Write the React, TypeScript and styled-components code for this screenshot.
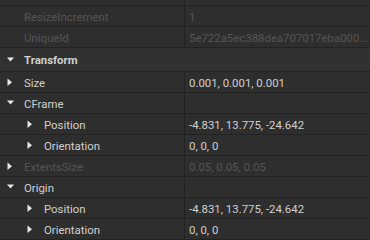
import React from "react";
import styled, { createGlobalStyle } from "styled-components";

const Global = createGlobalStyle`
  html, body { margin: 0; padding: 0; background: #2e2e2e; }
  body { font-family: "Roboto", "Noto Sans", sans-serif; overflow: hidden; }
`;

const Panel = styled.div`
  width: 370px;
  height: 240px;
  background: #2e2e2e;
  overflow: hidden;
  display: flex;
  flex-direction: column;
`;

const Stub = styled.div`
  height: 5px;
  flex: none;
  display: grid;
  grid-template-columns: 185px 1fr;
  border-bottom: 1px solid #222222;
`;

const Row = styled.div`
  height: 20px;
  flex: none;
  display: grid;
  grid-template-columns: 185px 1fr;
  border-bottom: 1px solid #222222;
  font-size: 11.4px;
  line-height: 20px;
`;

const NameCell = styled.div<{ $depth: number; $muted?: boolean }>`
  border-right: 1px solid #222222;
  display: flex;
  align-items: center;
  padding-left: ${(p) => (p.$depth === 0 ? 7 : 27)}px;
  padding-top: 1px;
  color: ${(p) => (p.$muted ? "#555555" : "#d0d0d0")};
  white-space: nowrap;
  overflow: hidden;
`;

const ValueCell = styled.div<{ $muted?: boolean }>`
  padding-left: 4px;
  padding-top: 1px;
  color: ${(p) => (p.$muted ? "#555555" : "#d0d0d0")};
  white-space: nowrap;
  overflow: hidden;
`;

const Arrow = styled.span`
  width: 17px;
  flex: none;
  display: flex;
  align-items: center;
  margin-top: -1px;
`;

const Header = styled.div`
  height: 24px;
  flex: none;
  display: flex;
  align-items: center;
  padding-left: 7px;
  padding-top: 1px;
  box-sizing: border-box;
  background: #313131;
  border-bottom: 1px solid #222222;
  font-size: 11.4px;
  font-weight: 700;
  color: #d0d0d0;
`;

const Down = () => (
  <svg width="8" height="6" viewBox="0 0 8 6">
    <path d="M0 0.5 H7 L3.5 4.5 Z" fill="#e8e8e8" />
  </svg>
);

const Right = () => (
  <svg width="6" height="9" viewBox="0 0 6 9">
    <path d="M0.5 0.5 V8 L5 4.25 Z" fill="#e8e8e8" />
  </svg>
);

type Prop = {
  name: string;
  value?: string;
  depth: number;
  arrow?: "down" | "right";
  muted?: boolean;
};

const Property = ({ name, value, depth, arrow, muted }: Prop) => (
  <Row>
    <NameCell $depth={depth} $muted={muted}>
      <Arrow>{arrow === "down" ? <Down /> : arrow === "right" ? <Right /> : null}</Arrow>
      {name}
    </NameCell>
    <ValueCell $muted={muted}>{value}</ValueCell>
  </Row>
);

export default function App() {
  return (
    <>
      <Global />
      <Panel>
        <Stub>
          <NameCell $depth={0} />
          <div />
        </Stub>
        <Property name="ResizeIncrement" value="1" depth={0} muted />
        <Property name="UniqueId" value="5e722a5ec388dea707017eba000..." depth={0} muted />
        <Header>
          <Arrow>
            <Down />
          </Arrow>
          Transform
        </Header>
        <Property name="Size" value="0.001, 0.001, 0.001" depth={0} arrow="right" />
        <Property name="CFrame" depth={0} arrow="down" />
        <Property name="Position" value="-4.831, 13.775, -24.642" depth={1} arrow="right" />
        <Property name="Orientation" value="0, 0, 0" depth={1} arrow="right" />
        <Property name="ExtentsSize" value="0.05, 0.05, 0.05" depth={0} arrow="right" muted />
        <Property name="Origin" depth={0} arrow="down" />
        <Property name="Position" value="-4.831, 13.775, -24.642" depth={1} arrow="right" />
        <Property name="Orientation" value="0, 0, 0" depth={1} arrow="right" />
      </Panel>
    </>
  );
}
